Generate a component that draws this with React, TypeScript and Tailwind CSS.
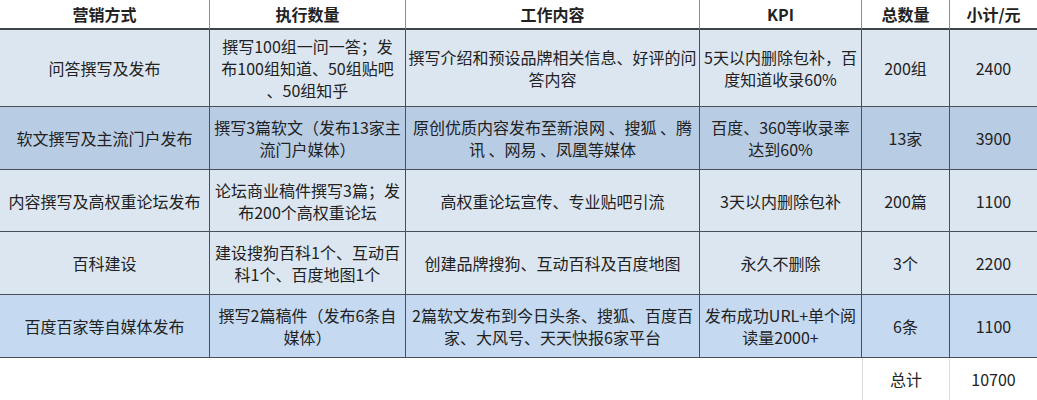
type Row = {
  bg: string;
  h: string;
  cells: string[][];
};

const headers = ["营销方式", "执行数量", "工作内容", "KPI", "总数量", "小计/元"];

const rows: Row[] = [
  {
    bg: "bg-[#dce6f1]",
    h: "h-[77px]",
    cells: [
      ["问答撰写及发布"],
      ["撰写100组一问一答；发", "布100组知道、50组贴吧", "、50组知乎"],
      ["撰写介绍和预设品牌相关信息、好评的问", "答内容"],
      ["5天以内删除包补，百", "度知道收录60%"],
      ["200组"],
      ["2400"],
    ],
  },
  {
    bg: "bg-[#b8cce4]",
    h: "h-[63px]",
    cells: [
      ["软文撰写及主流门户发布"],
      ["撰写3篇软文（发布13家主", "流门户媒体）"],
      ["原创优质内容发布至新浪网 、搜狐 、腾", "讯 、网易 、凤凰等媒体"],
      ["百度、360等收录率", "达到60%"],
      ["13家"],
      ["3900"],
    ],
  },
  {
    bg: "bg-[#dce6f1]",
    h: "h-[62px]",
    cells: [
      ["内容撰写及高权重论坛发布"],
      ["论坛商业稿件撰写3篇；发", "布200个高权重论坛"],
      ["高权重论坛宣传、专业贴吧引流"],
      ["3天以内删除包补"],
      ["200篇"],
      ["1100"],
    ],
  },
  {
    bg: "bg-[#dce6f1]",
    h: "h-[63px]",
    cells: [
      ["百科建设"],
      ["建设搜狗百科1个、互动百", "科1个、百度地图1个"],
      ["创建品牌搜狗、互动百科及百度地图"],
      ["永久不删除"],
      ["3个"],
      ["2200"],
    ],
  },
  {
    bg: "bg-[#c5d9f1]",
    h: "h-[63px]",
    cells: [
      ["百度百家等自媒体发布"],
      ["撰写2篇稿件（发布6条自", "媒体）"],
      ["2篇软文发布到今日头条、搜狐、百度百", "家、大风号、天天快报6家平台"],
      ["发布成功URL+单个阅", "读量2000+"],
      ["6条"],
      ["1100"],
    ],
  },
];

function Cell({ lines, last }: { lines: string[]; last: boolean }) {
  return (
    <div
      className={
        "flex flex-col items-center justify-center text-center border-b border-[#4a4f57] " +
        (last ? "" : "border-r")
      }
    >
      {lines.map((l, i) => (
        <span key={i} className="block whitespace-pre leading-[22px]">
          {l}
        </span>
      ))}
    </div>
  );
}

export default function App() {
  return (
    <div className="w-[1037px] h-[400px] bg-white overflow-hidden font-['Noto_Sans_CJK_SC',sans-serif] text-[16px] text-[#222]">
      <div className="grid grid-cols-[210px_196px_294px_162px_88px_87px]">
        {/* header */}
        {headers.map((t, i) => (
          <div
            key={t}
            className={
              "h-[30px] flex items-center justify-center font-bold border-b-2 border-b-[#3f444b] " +
              (i < 5 ? "border-r border-r-[#8a8f96]" : "")
            }
          >
            {t}
          </div>
        ))}

        {rows.map((r, ri) => (
          <div key={ri} className={`contents`}>
            {r.cells.map((c, ci) => (
              <div key={ci} className={`${r.bg} ${r.h} grid`}>
                <Cell lines={c} last={ci === 5} />
              </div>
            ))}
          </div>
        ))}

        {/* total row */}
        <div className="col-span-4 h-[42px]" />
        <div className="h-[42px] flex items-center justify-center border-l border-r border-[#dcdcdc]">
          总计
        </div>
        <div className="h-[42px] flex items-center justify-center">10700</div>
      </div>
    </div>
  );
}
